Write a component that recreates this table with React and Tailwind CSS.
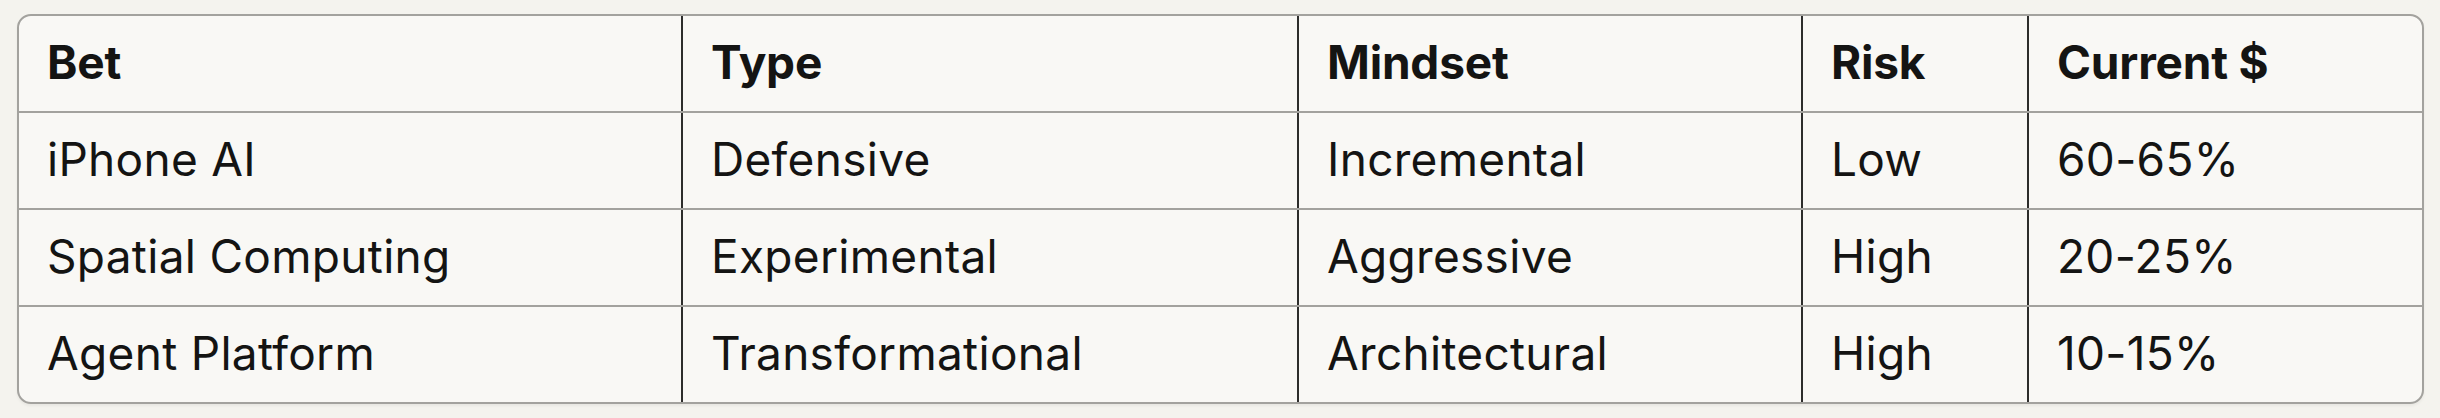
const columns = [
  { label: 'Bet', width: 'w-[664px]' },
  { label: 'Type', width: 'w-[616px]' },
  { label: 'Mindset', width: 'w-[504px]' },
  { label: 'Risk', width: 'w-[226px]' },
  { label: 'Current $', width: 'flex-1' },
]

const rows = [
  ['iPhone AI', 'Defensive', 'Incremental', 'Low', '60-65%'],
  ['Spatial Computing', 'Experimental', 'Aggressive', 'High', '20-25%'],
  ['Agent Platform', 'Transformational', 'Architectural', 'High', '10-15%'],
]

const Cell = ({ width, last, bold, children }) => (
  <div
    className={`${width} flex items-center pl-[28px] pb-[3px] ${last ? '' : 'border-r-2 border-[#2d2d2b]'} ${
      bold ? 'font-bold tracking-[-0.2px]' : 'font-normal tracking-[0.3px]'
    }`}
  >
    {children}
  </div>
)

export default function App() {
  return (
    <div className="min-h-[418px] bg-[#f4f3ee] pl-[17px] pr-[16px] pt-[14px] pb-[15px] font-['Inter',sans-serif] text-[46px] leading-none text-[#141413]">
      <div className="overflow-hidden rounded-[14px] border-2 border-[#a3a29e] bg-[#f9f8f5] shadow-[0_2px_3px_rgba(0,0,0,0.05)]">
        {/* header */}
        <div className="flex h-[97px] border-b-2 border-[#a3a29e]">
          {columns.map((col, i) => (
            <Cell key={col.label} width={col.width} last={i === columns.length - 1} bold>
              {col.label}
            </Cell>
          ))}
        </div>

        {rows.map((row, r) => (
          <div
            key={row[0]}
            className={`flex ${r === rows.length - 1 ? 'h-[95px]' : 'h-[97px] border-b-2 border-[#a3a29e]'}`}
          >
            {row.map((val, i) => (
              <Cell key={i} width={columns[i].width} last={i === row.length - 1}>
                {val}
              </Cell>
            ))}
          </div>
        ))}
      </div>
    </div>
  )
}
